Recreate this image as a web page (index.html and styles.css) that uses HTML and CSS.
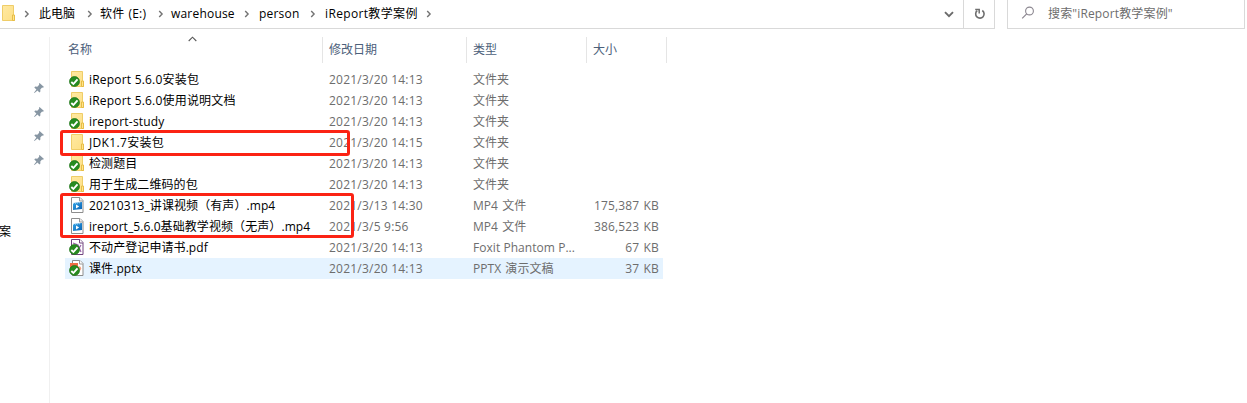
FILE: index.html
```html
<!DOCTYPE html>
<html lang="zh-CN">
<head>
<meta charset="utf-8">
<title>iReport教学案例</title>
<link rel="stylesheet" href="styles.css">
</head>
<body>
<svg class="defs" width="0" height="0">
  <defs>
    <linearGradient id="gold" x1="0" y1="0" x2="1" y2="1"><stop offset="0" stop-color="#ffe9a2"/><stop offset="1" stop-color="#fddf84"/></linearGradient>
    <linearGradient id="film" x1="0" y1="0" x2="1" y2="1"><stop offset="0" stop-color="#35a5e6"/><stop offset="1" stop-color="#0862b4"/></linearGradient>
    <symbol id="folder" viewBox="0 0 16 18">
      <path d="M2.5 1.5h11v10h1v5h-12z" fill="url(#gold)" stroke="#efcd68"/>
      <path d="M12.5 16.5v-5.500h2v5.500z" fill="#ffe48d" stroke="#e7bd45"/>
    </symbol>
    <symbol id="check" viewBox="0 0 11 11">
      <circle cx="5.500" cy="5.500" r="5" fill="#278b20" stroke="#1c7418" stroke-width=".7"/>
      <path d="M2.300 6l2.100 2L8.500 3.300" fill="none" stroke="#fff" stroke-width="1.900"/>
    </symbol>
    <symbol id="video" viewBox="0 0 16 18">
      <path d="M2.500 1.500h8.500l3 3v12H2.500z" fill="#fff" stroke="#8d8d8d"/>
      <path d="M10.500 1.500v3.500H14" fill="#eee" stroke="#999"/>
      <path d="M4 7l9-1v7l-9 1z" fill="url(#film)"/><path d="M4 7.500l7-.8" stroke="#a9d8f5" stroke-dasharray="1 1"/>
      <path d="M7 8.600v4l3.200-2z" fill="#fff"/>
    </symbol>
    <symbol id="pdf" viewBox="0 0 16 18">
      <path d="M2.500 1.500h8.500l3 3v12H2.500z" fill="#fff" stroke="#70437f"/>
      <path d="M10.500 1.500v3.500H14" fill="#fff" stroke="#70437f"/>
      <path d="M4 5l5 2 3 7M12 7l-4 7" fill="none" stroke="#9a62a8" stroke-width="1.200"/>
    </symbol>
    <symbol id="ppt" viewBox="0 0 16 18">
      <path d="M3.500 1.500H11l3 3v12H3.500z" fill="#fff" stroke="#8d8d8d"/>
      <path d="M10.500 1.500v3.500H14" fill="#fff" stroke="#999"/>
      <path d="M1 4h8v7H1z" fill="#ef6c42"/><circle cx="10" cy="9.500" r="2.200" fill="#f3a383"/>
    </symbol>
    <symbol id="pin" viewBox="0 0 12 12">
      <path d="M6.500 1l4.500 4-1.200.8-.7-.2-1.800 2 .1 2-1 .9L4.500 8.600 1.500 11 1 10.700l2.400-3.200L1.300 5.600l.9-1 2.100.1 1.900-2-.2-.9z" fill="#8796a3"/>
    </symbol>
    <symbol id="chev" viewBox="0 0 6 8"><path d="M1.200 1l2.900 3-2.900 3" fill="none" stroke="#737373" stroke-width="1.400"/></symbol>
  </defs>
</svg>

<header class="toolbar">
  <div class="address">
    <svg class="address-icon" width="16" height="18"><use href="#folder"/></svg>
    <nav class="crumbs">
      <svg class="chev" width="6" height="8"><use href="#chev"/></svg>
      <span class="crumb pc">此电脑</span>
      <svg class="chev" width="6" height="8"><use href="#chev"/></svg>
      <span class="crumb drive">软件 (E:)</span>
      <svg class="chev" width="6" height="8"><use href="#chev"/></svg>
      <span class="crumb warehouse">warehouse</span>
      <svg class="chev" width="6" height="8"><use href="#chev"/></svg>
      <span class="crumb person">person</span>
      <svg class="chev" width="6" height="8"><use href="#chev"/></svg>
      <span class="crumb current">iReport教学案例</span>
      <svg class="chev" width="6" height="8"><use href="#chev"/></svg>
    </nav>
    <div class="history"><svg width="10" height="7" viewBox="0 0 10 7"><path d="M1 1.200l4 4 4-4" fill="none" stroke="#6b6b6b" stroke-width="1.900"/></svg></div>
    <div class="refresh"><svg width="12" height="12" viewBox="0 0 12 12"><path d="M8.300 2.500A4.200 4.200 0 1 1 3.200 2.700" fill="none" stroke="#6e6e6e" stroke-width="1.600"/><path d="M1.200 1.500h4v4" fill="none" stroke="#6e6e6e" stroke-width="1.500"/></svg></div>
  </div>
  <div class="search">
    <svg width="14" height="14" viewBox="0 0 14 14"><circle cx="8.500" cy="5" r="3.900" fill="none" stroke="#8c8790" stroke-width="1.100"/><path d="M5.700 7.800L1.200 12.300" stroke="#8c8790" stroke-width="1.200"/></svg>
    <span>搜索"iReport教学案例"</span>
  </div>
</header>

<div class="body">
  <aside class="sidebar">
    <div class="pins">
      <svg width="12" height="12"><use href="#pin"/></svg>
      <svg width="12" height="12"><use href="#pin"/></svg>
      <svg width="12" height="12"><use href="#pin"/></svg>
      <svg width="12" height="12"><use href="#pin"/></svg>
    </div>
    <div class="side-item">案</div>
  </aside>
  <main class="files">
    <div class="columns">
      <div class="col first">名称<svg class="sort" width="9" height="6" viewBox="0 0 9 6"><path d="M.7 5l3.800-3.800L8.300 5" fill="none" stroke="#5a5a5a" stroke-width="1.100"/></svg></div>
      <div class="col">修改日期</div><div class="col">类型</div><div class="col">大小</div>
    </div>
    <div class="rows">
      <div class="row"><div class="icon"><svg width="16" height="18"><use href="#folder"/></svg><svg class="badge" width="11" height="11"><use href="#check"/></svg></div><div class="name wide">iReport 5.6.0安装包</div><div class="date">2021/3/20 14:13</div><div class="type">文件夹</div><div class="size"></div></div>
      <div class="row"><div class="icon"><svg width="16" height="18"><use href="#folder"/></svg><svg class="badge" width="11" height="11"><use href="#check"/></svg></div><div class="name wide">iReport 5.6.0使用说明文档</div><div class="date">2021/3/20 14:13</div><div class="type">文件夹</div><div class="size"></div></div>
      <div class="row"><div class="icon"><svg width="16" height="18"><use href="#folder"/></svg><svg class="badge" width="11" height="11"><use href="#check"/></svg></div><div class="name wide">ireport-study</div><div class="date">2021/3/20 14:13</div><div class="type">文件夹</div><div class="size"></div></div>
      <div class="row"><div class="icon"><svg width="16" height="18"><use href="#folder"/></svg></div><div class="name wider">JDK1.7安装包</div><div class="date">2021/3/20 14:15</div><div class="type">文件夹</div><div class="size"></div></div>
      <div class="row"><div class="icon"><svg width="16" height="18"><use href="#folder"/></svg><svg class="badge" width="11" height="11"><use href="#check"/></svg></div><div class="name">检测题目</div><div class="date">2021/3/20 14:13</div><div class="type">文件夹</div><div class="size"></div></div>
      <div class="row"><div class="icon"><svg width="16" height="18"><use href="#folder"/></svg><svg class="badge" width="11" height="11"><use href="#check"/></svg></div><div class="name">用于生成二维码的包</div><div class="date">2021/3/20 14:13</div><div class="type">文件夹</div><div class="size"></div></div>
      <div class="row"><div class="icon"><svg width="16" height="18"><use href="#video"/></svg></div><div class="name">20210313_讲课视频（有声）.mp4</div><div class="date">2021/3/13 14:30</div><div class="type">MP4 文件</div><div class="size">175,387 KB</div></div>
      <div class="row"><div class="icon"><svg width="16" height="18"><use href="#video"/></svg></div><div class="name">ireport_5.6.0基础教学视频（无声）.mp4</div><div class="date">2021/3/5 9:56</div><div class="type">MP4 文件</div><div class="size">386,523 KB</div></div>
      <div class="row"><div class="icon"><svg width="16" height="18"><use href="#pdf"/></svg><svg class="badge" width="11" height="11"><use href="#check"/></svg></div><div class="name">不动产登记申请书.pdf</div><div class="date">2021/3/20 14:13</div><div class="type foxit">Foxit Phantom P...</div><div class="size">67 KB</div></div>
      <div class="row hover"><div class="icon"><svg width="16" height="18"><use href="#ppt"/></svg><svg class="badge" width="11" height="11"><use href="#check"/></svg></div><div class="name">课件.pptx</div><div class="date">2021/3/20 14:13</div><div class="type">PPTX 演示文稿</div><div class="size">37 KB</div></div>
      <div class="mark mark-jdk"></div>
      <div class="mark mark-video"></div>
    </div>
  </main>
</div>
</body>
</html>
```

FILE: styles.css
```css
* { box-sizing: border-box; }
body {
  margin: 0;
  height: 403px;
  overflow: hidden;
  background: #fff;
  color: #000;
  font: 12px/20px "Open Sans", "Noto Sans CJK SC", sans-serif;
  white-space: nowrap;
}
svg { display: block; flex: none; }
.defs { position: absolute; }

.toolbar { display: flex; height: 29px; gap: 12px; }
.address {
  display: flex;
  width: 995px;
  border-right: 1px solid #d9d9d9;
  border-bottom: 1px solid #d9d9d9;
}
.address-icon { margin-top: 4px; }
.crumbs { display: flex; flex: 1; align-items: center; padding: 0 0 1px 8px; }
.crumb { flex: none; }
.pc { width: 36px; margin: 0 12px 0 9px; }
.drive { width: 46px; margin: 0 12px 0 7px; letter-spacing: .15px; word-spacing: 1px; }
.warehouse { width: 63px; margin: 0 10px 0 7px; letter-spacing: .2px; }
.person { width: 41px; margin: 0 10px 0 9px; letter-spacing: .2px; }
.current { width: 92px; margin: 0 9px 0 9px; letter-spacing: .35px; }
.history { display: flex; align-items: center; padding-right: 9px; }
.refresh {
  display: flex;
  align-items: center;
  justify-content: center;
  width: 31px;
  padding-left: 2px;
  border-left: 1px solid #d9d9d9;
}
.search {
  display: flex;
  width: 238px;
  gap: 13px;
  padding: 4px 0 0 13px;
  border: 1px solid #d9d9d9;
  border-top: 0;
  color: #6d6d6d;
  letter-spacing: .15px;
}
.search svg { margin-top: 2px; }

.body { display: flex; height: 374px; padding-top: 8px; }
.sidebar { width: 50px; border-right: 1px solid #f0f0f0; }
.pins { display: grid; gap: 12px; justify-content: end; padding: 45px 4px 0 0; }
.side-item { margin: 56px 0 0 -1px; }
.files { width: 617px; }
.columns { display: grid; grid-template-columns: 273px 144px 120px 80px; height: 26px; color: #4c607a; }
.col { position: relative; padding: 3px 0 0 6px; border-right: 1px solid #e5e5e5; }
.col.first { padding-left: 18px; }
.sort { position: absolute; left: 138px; top: -1px; }
.rows { position: relative; margin: 6px 0 0 15px; width: 598px; }
.row {
  display: grid;
  grid-template-columns: 24px 240px 144px 110px 76px;
  height: 21px;
  line-height: 21px;
  color: #6d6d6d;
}
.hover { background: #e5f3ff; }
.icon { position: relative; padding: 1px 0 0 4px; }
.badge { position: absolute; left: 4px; top: 7px; }
.name { color: #000; letter-spacing: .08px; }
.name.wide { letter-spacing: .2px; }
.name.wider { letter-spacing: .33px; }
.date { letter-spacing: .22px; }
.type { letter-spacing: .05px; word-spacing: 1px; }
.type.foxit { letter-spacing: .05px; word-spacing: 0; }
.size { text-align: right; letter-spacing: .15px; word-spacing: 1px; }
.mark { position: absolute; left: -5px; border: 3px solid #fb2314; border-radius: 3px; }
.mark-jdk { top: 61px; width: 290px; height: 26px; }
.mark-video { top: 124px; width: 294px; height: 45px; }
```
